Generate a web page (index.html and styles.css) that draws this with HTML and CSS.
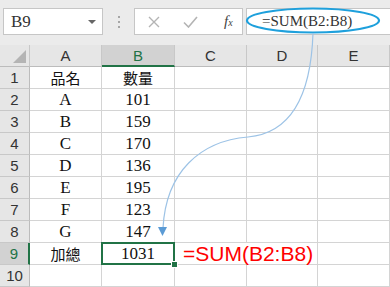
FILE: index.html
```html
<!DOCTYPE html>
<html>
<head>
  <title>SUM</title>
  <link rel="stylesheet" href="styles.css">
</head>
<body>
  <div class="app">
    <div class="toolbar">
      <div class="namebox"><span>B9</span><span class="caret"></span></div>
      <div class="grip"><i></i><i></i><i></i></div>
      <div class="tools">
        <svg width="12" height="12" viewBox="0 0 12 12"><path d="M1 1L11 11M11 1L1 11" stroke="#b4b4b4" stroke-width="1.4" fill="none"/></svg>
        <svg width="15" height="12" viewBox="0 0 15 12"><path d="M1 6.5L5.5 11L14 1" stroke="#b4b4b4" stroke-width="1.6" fill="none"/></svg>
        <span class="fx">f<sub>x</sub></span>
      </div>
      <div class="formula">=SUM(B2:B8)</div>
    </div>

    <div class="sheet">
      <div class="hd corner"></div>
      <div class="hd">A</div>
      <div class="hd sel-col">B</div>
      <div class="hd">C</div>
      <div class="hd">D</div>
      <div class="hd">E</div>

      <div class="rh">1</div><div class="c cjk">品名</div><div class="c cjk">數量</div><div class="c"></div><div class="c"></div><div class="c"></div>
      <div class="rh">2</div><div class="c">A</div><div class="c">101</div><div class="c"></div><div class="c"></div><div class="c"></div>
      <div class="rh">3</div><div class="c">B</div><div class="c">159</div><div class="c"></div><div class="c"></div><div class="c"></div>
      <div class="rh">4</div><div class="c">C</div><div class="c">170</div><div class="c"></div><div class="c"></div><div class="c"></div>
      <div class="rh">5</div><div class="c">D</div><div class="c">136</div><div class="c"></div><div class="c"></div><div class="c"></div>
      <div class="rh">6</div><div class="c">E</div><div class="c">195</div><div class="c"></div><div class="c"></div><div class="c"></div>
      <div class="rh">7</div><div class="c">F</div><div class="c">123</div><div class="c"></div><div class="c"></div><div class="c"></div>
      <div class="rh">8</div><div class="c">G</div><div class="c">147</div><div class="c"></div><div class="c"></div><div class="c"></div>
      <div class="rh sel-row">9</div><div class="c cjk">加總</div><div class="c active">1031</div><div class="c note">=SUM(B2:B8)</div><div class="c"></div>
      <div class="rh">10</div><div class="c"></div><div class="c"></div><div class="c"></div><div class="c"></div><div class="c"></div>
    </div>

    <svg class="annot" width="390" height="287" viewBox="0 0 390 287">
      <ellipse cx="313" cy="20.5" rx="66" ry="12" fill="none" stroke="#1ea0dc" stroke-width="2.2"/>
      <path d="M313 33 C311 95 292 133 248 137 C200 141 166 172 163 228" fill="none" stroke="#9dc3e6" stroke-width="1.2"/>
      <polygon points="158,227 167,227 162.5,236" fill="#5b9bd5"/>
    </svg>
  </div>
</body>
</html>
```

FILE: styles.css
```css
body { margin: 0; background: #fff; font-family: "Liberation Sans", Arial, sans-serif; }
.app { position: relative; width: 390px; height: 287px; overflow: hidden; }

/* formula bar */
.toolbar { height: 45px; background: #ebebeb; display: flex; align-items: flex-start; padding-top: 8px; box-sizing: border-box; }
.namebox {
  margin-left: 3px; width: 100px; height: 27px; box-sizing: border-box;
  background: #fff; border: 1px solid #c6c6c6;
  display: flex; align-items: center; justify-content: space-between; padding: 0 6px 0 7px;
  font-family: "Liberation Serif", serif; font-size: 17px; color: #333;
}
.caret { width: 0; height: 0; border-left: 4px solid transparent; border-right: 4px solid transparent; border-top: 4px solid #666; }
.grip { width: 31px; height: 27px; display: flex; flex-direction: column; align-items: center; justify-content: center; gap: 3px; }
.grip i { display: block; width: 2px; height: 2px; background: #a6a6a6; }
.tools {
  width: 109px; height: 27px; box-sizing: border-box; background: #fff; border: 1px solid #c6c6c6;
  display: flex; align-items: center; padding-left: 13px; gap: 23px;
}
.fx { font-family: "Liberation Serif", serif; font-style: italic; font-size: 15px; color: #444; margin-left: 3px; }
.fx sub { font-size: 10px; vertical-align: 0; }
.formula {
  margin-left: 3px; flex: 1; height: 27px; box-sizing: border-box; background: #fff; border: 1px solid #c6c6c6; border-right: 0;
  padding-left: 15px; line-height: 25px;
  font-family: "Liberation Serif", serif; font-size: 15px; color: #333;
}

/* grid */
.sheet {
  display: grid;
  grid-template-columns: 30px 72px 73px 72px 71px 72px;
  grid-template-rows: repeat(11, 22px);
}
.sheet > div { box-sizing: border-box; display: flex; align-items: center; justify-content: center; }
.hd { background: #e6e6e6; border-right: 1px solid #c8c8c8; border-bottom: 1px solid #bcbcbc; font-size: 15px; color: #333; }
.corner { position: relative; }
.corner::after {
  content: ""; position: absolute; right: 3px; bottom: 3px; width: 0; height: 0;
  border-left: 13px solid transparent; border-bottom: 13px solid #b4b4b4;
}
.sel-col { background: #d2d2d2; border-bottom: 2px solid #217346; color: #217346; }
.rh { background: #e6e6e6; border-right: 1px solid #bcbcbc; border-bottom: 1px solid #c8c8c8; font-size: 15px; color: #333; }
.sel-row { background: #d2d2d2; border-right: 2px solid #217346; color: #217346; }
.c {
  border-right: 1px solid #d4d4d4; border-bottom: 1px solid #d4d4d4;
  font-family: "Liberation Serif", "Noto Sans CJK TC", serif; font-size: 17px; color: #111;
}
.cjk { font-family: "Noto Sans CJK TC", sans-serif; font-size: 15px; }
.active { position: relative; }
.active::before {
  content: ""; position: absolute; left: -1px; top: -1px; right: -1px; bottom: -1px;
  border: 2px solid #217346;
}
.active::after {
  content: ""; position: absolute; right: -4px; bottom: -4px; width: 5px; height: 5px;
  background: #217346; border: 1px solid #fff;
}
.sheet > .note {
  grid-column: span 2; justify-content: flex-start; padding-left: 8px; padding-top: 1px;
  font-family: "Liberation Sans", Arial, sans-serif; font-size: 21px; color: #ff0000; white-space: nowrap;
}

.annot { position: absolute; left: 0; top: 0; pointer-events: none; }
```
